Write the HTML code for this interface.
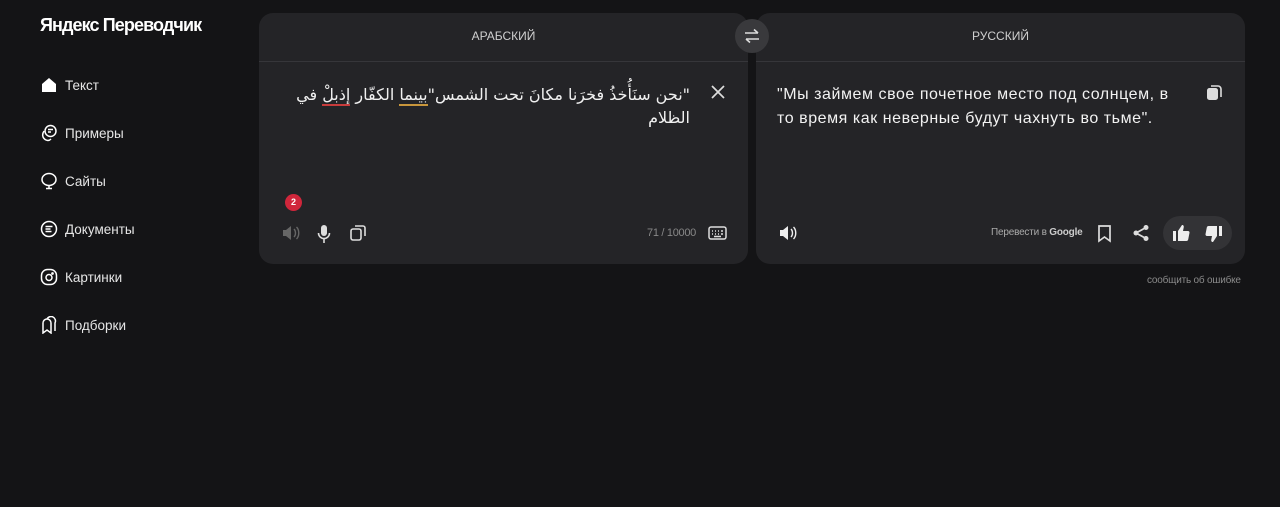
<!DOCTYPE html><html><head><meta charset="utf-8"><style>
body{margin:0;width:1280px;height:507px;background:#141416;font-family:"Liberation Sans","Noto Sans CJK SC",sans-serif;color:#fff;position:relative;overflow:hidden}
.a{position:absolute}
.logo{left:40px;top:15px;font-size:18px;font-weight:bold;letter-spacing:-0.9px}
.nav{left:40px;font-size:13.5px;color:#e6e6e6;display:flex;align-items:center;gap:7px}
.card{background:#242427;border-radius:14px;top:13px;height:251px}
.hd{position:absolute;left:0;right:0;top:0;height:48px;border-bottom:1px solid #36363a;text-align:center;line-height:46px;font-size:12px;color:#cfcfcf}
.ic{position:absolute}
</style></head><body>
<div class="a logo">Яндекс Переводчик</div>
<div class="a nav" style="top:76px"><svg width="18" height="18" viewBox="0 0 18 18"><path d="M9 2L2 8v8h14V8z" fill="#fff"/></svg>Текст</div>
<div class="a nav" style="top:124px"><svg width="18" height="18" viewBox="0 0 18 18" fill="none" stroke="#fff" stroke-width="1.5"><circle cx="10.5" cy="7" r="5.5"/><path d="M8 5.5h5M8 8h3M4 7c-2 3-2 7 2 9 2 1 4 0 5-1"/></svg>Примеры</div>
<div class="a nav" style="top:172px"><svg width="18" height="18" viewBox="0 0 18 18" fill="none" stroke="#fff" stroke-width="1.5"><ellipse cx="9" cy="7.5" rx="7" ry="6"/><path d="M9 13.5v3M6 16.5h6"/></svg>Сайты</div>
<div class="a nav" style="top:220px"><svg width="18" height="18" viewBox="0 0 18 18" fill="none" stroke="#fff" stroke-width="1.5"><circle cx="9" cy="9" r="7.5"/><path d="M5.5 6.5h7M5.5 9h5M5.5 11.5h6"/></svg>Документы</div>
<div class="a nav" style="top:268px"><svg width="18" height="18" viewBox="0 0 18 18" fill="none" stroke="#fff" stroke-width="1.5"><rect x="1.5" y="1.5" width="15" height="15" rx="6"/><circle cx="9" cy="9.5" r="3"/><circle cx="12.5" cy="5.5" r=".6" fill="#fff"/></svg>Картинки</div>
<div class="a nav" style="top:316px"><svg width="18" height="18" viewBox="0 0 18 18" fill="none" stroke="#fff" stroke-width="1.5"><path d="M3 17V7a4 4 0 0 1 8 0v10l-4-3z"/><path d="M7 3a4 4 0 0 1 8 4v8"/></svg>Подборки</div>

<div class="a card" style="left:259px;width:489px">
<div class="hd">АРАБСКИЙ</div>
<div class="a" dir="rtl" style="right:58px;top:70px;width:420px;font-family:'DejaVu Sans',sans-serif;font-size:16px;line-height:23px;color:#f0f0f0">"نحن سنَأُخذُ فخرَنا مكانَ تحت الشمس"<span style="border-bottom:2px solid #c8963c">بينما</span> الكفّار <span style="border-bottom:2px solid #c83c3c">إذبلْ</span> في الظلام</div>
<svg class="ic" style="left:451px;top:71px" width="16" height="16" viewBox="0 0 16 16" stroke="#ddd" stroke-width="1.7"><path d="M2 2l12 12M14 2L2 14"/></svg>
<div class="a" style="left:26px;top:181px;width:17px;height:17px;border-radius:50%;background:#d0263b;font-size:9px;font-weight:bold;text-align:center;line-height:17px">2</div>
<svg class="ic" style="left:22px;top:211px" width="20" height="18" viewBox="0 0 20 18" fill="#666"><path d="M2 6h3l5-4v14l-5-4H2z"/><path d="M13 5c2 2 2 6 0 8M15.5 3c3 3 3 9 0 12" stroke="#666" fill="none" stroke-width="1.4"/></svg>
<svg class="ic" style="left:58px;top:211px" width="14" height="20" viewBox="0 0 14 20"><rect x="4" y="1" width="6" height="11" rx="3" fill="#ddd"/><path d="M1.5 9a5.5 5.5 0 0 0 11 0M7 14.5V19" stroke="#ddd" stroke-width="1.6" fill="none"/></svg>
<svg class="ic" style="left:90px;top:211px" width="18" height="18" viewBox="0 0 18 18" fill="none" stroke="#ddd" stroke-width="1.6"><rect x="2" y="5" width="10" height="11" rx="2"/><path d="M6 2h8a2 2 0 0 1 2 2v8"/></svg>
<div class="a" style="left:388px;top:214px;font-size:11px;color:#888;letter-spacing:-0.3px">71 / 10000</div>
<svg class="ic" style="left:449px;top:213px" width="19" height="14" viewBox="0 0 19 14" fill="none" stroke="#ddd" stroke-width="1.5"><rect x="1" y="1" width="17" height="12" rx="2"/><path d="M4 5h1M7 5h1M10 5h1M13 5h2M4 8h1M7 8h1M10 8h1M13 8h2M6 10.5h7"/></svg>
</div>

<div class="a card" style="left:756px;width:489px">
<div class="hd">РУССКИЙ</div>
<div class="a" style="left:21px;top:70px;width:430px;font-size:16px;line-height:24px;letter-spacing:0.55px;color:#f2f2f2">"Мы займем свое почетное место под солнцем, в<br>то время как неверные будут чахнуть во тьме".</div>
<svg class="ic" style="left:450px;top:71px" width="17" height="17" viewBox="0 0 17 17"><rect x="1" y="4" width="11" height="12" rx="2.5" fill="#ddd"/><path d="M5 2h7a3 3 0 0 1 3 3v8" stroke="#ddd" stroke-width="1.6" fill="none"/></svg>
<svg class="ic" style="left:22px;top:211px" width="20" height="18" viewBox="0 0 20 18" fill="#eee"><path d="M2 6h3l5-4v14l-5-4H2z"/><path d="M13 5c2 2 2 6 0 8M15.5 3c3 3 3 9 0 12" stroke="#eee" fill="none" stroke-width="1.4"/></svg>
<div class="a" style="left:235px;top:214px;font-size:10px;color:#aaa;letter-spacing:-0.2px">Перевести в <b style="color:#ccc">Google</b></div>
<svg class="ic" style="left:341px;top:211px" width="15" height="19" viewBox="0 0 15 19" fill="none" stroke="#ddd" stroke-width="1.7"><path d="M2 2h11v15l-5.5-4L2 17z"/></svg>
<svg class="ic" style="left:376px;top:211px" width="18" height="18" viewBox="0 0 18 18" fill="#ddd"><circle cx="14" cy="3.5" r="2.5"/><circle cx="4" cy="9" r="2.5"/><circle cx="14" cy="14.5" r="2.5"/><path d="M14 3.5L4 9l10 5.5" stroke="#ddd" stroke-width="1.7" fill="none"/></svg>
<div class="a" style="left:407px;top:203px;width:69px;height:34px;border-radius:17px;background:#333336"></div>
<svg class="ic" style="left:416px;top:211px" width="18" height="18" viewBox="0 0 18 18" fill="#eee"><rect x="1" y="7" width="3" height="10"/><path d="M6 7l4-6c1.5 0 2 1 1.7 2.5L11 7h5a1.5 1.5 0 0 1 1.5 1.7l-1.3 6.8A2 2 0 0 1 14 17H6z"/></svg>
<svg class="ic" style="left:449px;top:212px;transform:rotate(180deg)" width="18" height="18" viewBox="0 0 18 18" fill="#eee"><rect x="1" y="7" width="3" height="10"/><path d="M6 7l4-6c1.5 0 2 1 1.7 2.5L11 7h5a1.5 1.5 0 0 1 1.5 1.7l-1.3 6.8A2 2 0 0 1 14 17H6z"/></svg>
</div>

<div class="a" style="left:735px;top:19px;width:34px;height:34px;border-radius:50%;background:#39393c"></div>
<svg class="ic" style="left:744px;top:28px" width="16" height="16" viewBox="0 0 16 16" fill="none" stroke="#ddd" stroke-width="1.6"><path d="M1 5h13M10 1.5L14 5M15 11H2M6 14.5L2 11"/></svg>
<div class="a" style="left:1147px;top:275px;font-size:10px;color:#8a8a8a;letter-spacing:-0.2px">сообщить об ошибке</div>
</body></html>
